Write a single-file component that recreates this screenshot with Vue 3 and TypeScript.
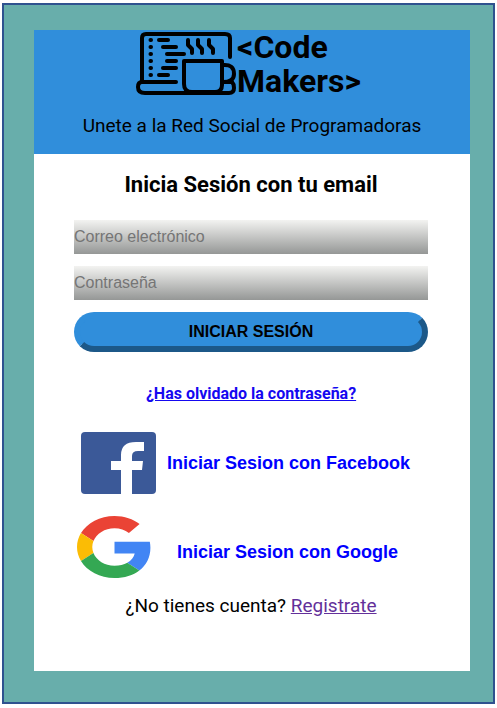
<script setup lang="ts">
import { ref } from 'vue'

const email = ref('')
const password = ref('')
const codeRows = [
  { y: 10, from: 23, to: 32 },
  { y: 17, from: 27, to: 40 },
  { y: 24, from: 31, to: 48 },
  { y: 31, from: 31, to: 40 },
  { y: 38, from: 27, to: 40 },
  { y: 45, from: 23, to: 32 },
]
const steam = [52, 62, 73]
</script>

<template>
  <div class="frame">
    <main class="card">
      <header class="banner">
        <div class="brand">
          <svg class="brand-icon" viewBox="0 0 101 66" fill="none" stroke="#000" stroke-width="4" stroke-linecap="round" stroke-linejoin="round" aria-hidden="true">
            <path d="M6 51V8Q6 4 10 4H89Q94 4 94 8V27" />
            <path d="M40 52H6Q2 52 2 57Q2 63 9 63H93Q98 63 98 58Q98 54 96 52H87" />
            <path d="M48 31H86V55Q86 62 79 62H56Q48 62 48 54Z" />
            <path d="M87 35Q98 34 98 44Q98 52 87 52" />
            <g v-for="row in codeRows" :key="row.y">
              <path :d="`M14.5 ${row.y}H15`" />
              <path :d="`M${row.from} ${row.y}H${row.to}`" />
            </g>
            <path v-for="x in steam" :key="x" :d="`M${x} 10V15L${x + 4} 19V23`" />
          </svg>
          <div class="brand-name">&lt;Code<br />Makers&gt;</div>
        </div>
        <p class="tagline">Unete a la Red Social de Programadoras</p>
      </header>

      <section class="content">
        <h1 class="title">Inicia Sesión con tu email</h1>
        <form class="form" @submit.prevent>
          <input v-model="email" class="field" type="email" placeholder="Correo electrónico" aria-label="Correo electrónico" />
          <input v-model="password" class="field" type="password" placeholder="Contraseña" aria-label="Contraseña" />
          <button class="submit" type="submit">INICIAR SESIÓN</button>
        </form>
        <a class="forgot" href="#">¿Has olvidado la contraseña?</a>

        <div class="providers">
          <a class="provider facebook" href="#">
            <svg class="provider-icon" viewBox="0 0 75 62" aria-hidden="true">
              <rect width="75" height="62" rx="4" fill="#3b5998" />
              <path d="M40 62V38H30V29H40V23Q40 10 55 10H63V19H57Q51 19 51 24V29H62L61 38H51V62Z" fill="#fff" />
            </svg>
            <span>Iniciar Sesion con Facebook</span>
          </a>
          <a class="provider google" href="#">
            <svg class="provider-icon" viewBox="0 0 48 48" preserveAspectRatio="none" aria-hidden="true">
              <path fill="#EA4335" d="M24 9.5c3.54 0 6.71 1.22 9.21 3.6l6.85-6.85C35.9 2.38 30.47 0 24 0 14.62 0 6.51 5.38 2.56 13.22l7.98 6.19C12.43 13.72 17.74 9.5 24 9.5z" />
              <path fill="#4285F4" d="M46.98 24.55c0-1.57-.15-3.09-.38-4.55H24v9.02h12.94c-.58 2.96-2.26 5.48-4.78 7.18l7.73 6c4.51-4.18 7.09-10.36 7.09-17.65z" />
              <path fill="#FBBC05" d="M10.53 28.59c-.48-1.45-.76-2.99-.76-4.59s.27-3.14.76-4.59l-7.98-6.19C.92 16.46 0 20.12 0 24c0 3.88.92 7.54 2.56 10.78l7.97-6.19z" />
              <path fill="#34A853" d="M24 48c6.48 0 11.93-2.13 15.89-5.81l-7.73-6c-2.15 1.45-4.92 2.3-8.16 2.3-6.26 0-11.57-4.22-13.47-9.91l-7.98 6.19C6.51 42.62 14.62 48 24 48z" />
            </svg>
            <span>Iniciar Sesion con Google</span>
          </a>
        </div>

        <p class="register">¿No tienes cuenta? <a href="#">Registrate</a></p>
      </section>
    </main>
  </div>
</template>

<style>
body {
  margin: 0;
  background: #fff;
}
</style>

<style scoped>
.frame {
  box-sizing: border-box;
  margin: 3px 2px 4px;
  padding: 25px 23px 31px 30px;
  border: 2px solid #2f528f;
  background: #68aeab;
  font-family: Roboto, sans-serif;
  color: #000;
}
.card {
  background: #fff;
}
.banner {
  padding-bottom: 16px;
  background: #308edb;
}
.brand {
  display: flex;
  justify-content: center;
  padding-right: 7px;
}
.brand-icon {
  flex: none;
  width: 101px;
  height: 66px;
}
.brand-name {
  font-size: 32px;
  font-weight: 700;
  line-height: 34px;
}
.tagline {
  margin: 16px 0 0;
  font-size: 19px;
  line-height: 24px;
  text-align: center;
}
.content {
  display: flex;
  flex-direction: column;
  padding: 19px 42px 53px 40px;
}
.title {
  margin: 0;
  font-size: 22px;
  font-weight: 700;
  line-height: 24px;
  text-align: center;
}
.form {
  display: flex;
  flex-direction: column;
  gap: 12px;
  margin-top: 23px;
}
.field {
  box-sizing: border-box;
  width: 100%;
  height: 34px;
  padding: 0;
  border: 0;
  background: linear-gradient(#f3f3f1, #959796);
  font-family: "Liberation Sans", sans-serif;
  font-size: 16px;
}
.field::placeholder {
  color: #757575;
}
.submit {
  height: 40px;
  padding: 0;
  border: 6px solid;
  border-color: #308edb #1c5888 #1c5888 #308edb;
  border-radius: 20px;
  background: #308edb;
  font-family: "Liberation Sans", sans-serif;
  font-size: 16px;
  font-weight: 700;
  line-height: 20px;
  color: #000;
}
.forgot {
  align-self: center;
  margin-top: 32px;
  font-size: 16px;
  font-weight: 700;
  line-height: 20px;
  color: #1508f0;
}
.providers {
  display: flex;
  flex-direction: column;
  gap: 22px;
  margin-top: 28px;
}
.provider {
  display: flex;
  align-items: center;
  font-family: "Liberation Sans", sans-serif;
  font-size: 18px;
  font-weight: 700;
  line-height: 20px;
  white-space: nowrap;
  color: #00f;
  text-decoration: none;
}
.provider-icon {
  flex: none;
  width: 75px;
  height: 62px;
}
.facebook {
  gap: 11px;
  padding-left: 7px;
}
.google {
  gap: 25px;
  padding-left: 3px;
}
.google span {
  padding-top: 10px;
}
.register {
  margin: 16px 0 0;
  font-size: 19px;
  line-height: 24px;
  text-align: center;
}
.register a {
  color: #63309a;
}
</style>
